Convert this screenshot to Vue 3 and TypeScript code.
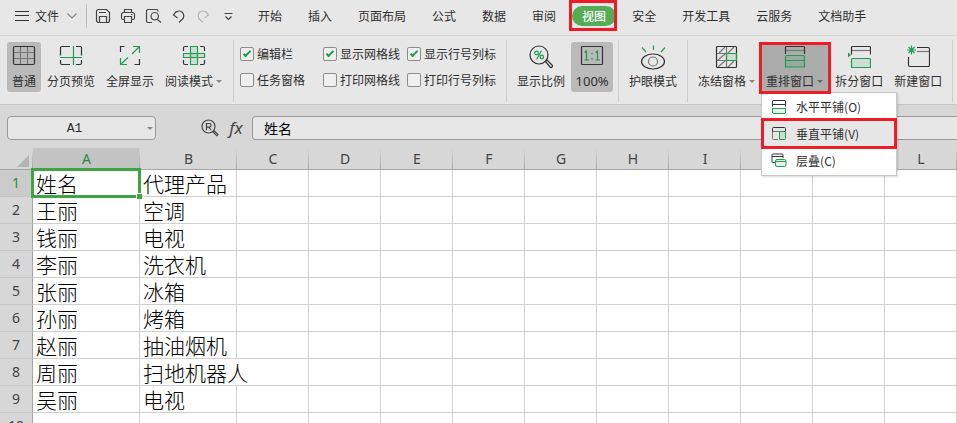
<script setup lang="ts">
import { ref } from 'vue'

interface Toggle {
  id: string
  label: string
  checked: boolean
}

const tabs: string[] = ['开始', '插入', '页面布局', '公式', '数据', '审阅', '视图', '安全', '开发工具', '云服务', '文档助手']
const activeTab = ref('视图')

const toggles = ref<Toggle[]>([
  { id: 'formula-bar', label: '编辑栏', checked: true },
  { id: 'gridlines', label: '显示网格线', checked: true },
  { id: 'headings', label: '显示行号列标', checked: true },
  { id: 'task-pane', label: '任务窗格', checked: false },
  { id: 'print-gridlines', label: '打印网格线', checked: false },
  { id: 'print-headings', label: '打印行号列标', checked: false },
])

const columns: string[] = ['A', 'B', 'C', 'D', 'E', 'F', 'G', 'H', 'I', 'J', 'K', 'L']
const emptyColumns: string[] = columns.slice(2)
const rows: [string, string][] = [
  ['姓名', '代理产品'],
  ['王丽', '空调'],
  ['钱丽', '电视'],
  ['李丽', '洗衣机'],
  ['张丽', '冰箱'],
  ['孙丽', '烤箱'],
  ['赵丽', '抽油烟机'],
  ['周丽', '扫地机器人'],
  ['吴丽', '电视'],
  ['', ''],
]

const cellName = ref('A1')
const formula = ref('姓名')
</script>

<template>
  <div class="app">
    <header class="topbar">
      <button class="file">
        <svg width="14" height="12" viewBox="0 0 14 12"><path d="M0 1.500h14M0 5.500h14M0 10.500h14" /></svg>
        <span>文件</span>
        <svg class="chev" width="10" height="6" viewBox="0 0 10 6"><path d="M.5.5 5 5 9.500.5" /></svg>
      </button>
      <div class="quick">
        <button aria-label="保存">
          <svg width="16" height="16" viewBox="0 0 16 16"><path d="M1.500 3.500a2 2 0 0 1 2-2h8l3 3v8a2 2 0 0 1-2 2h-9a2 2 0 0 1-2-2zM4.500 14V8.500h7V14M4 4.500h7" /></svg>
        </button>
        <button aria-label="打印">
          <svg width="16" height="16" viewBox="0 0 16 16"><path d="M4.500 4V1.500h7V4M4 11.500H3a1.500 1.500 0 0 1-1.500-1.500V6.500A2 2 0 0 1 3.500 4.500h9a2 2 0 0 1 2 2V10a1.500 1.500 0 0 1-1.500 1.500h-1M4.500 8.500h7v6h-7zM11 6.500h1.500" /></svg>
        </button>
        <button aria-label="打印预览">
          <svg width="17" height="16" viewBox="0 0 17 16"><path d="M7 14.500H3a1.500 1.500 0 0 1-1.500-1.500V3A1.500 1.500 0 0 1 3 1.500h8.500A1.500 1.500 0 0 1 13 3v.5M12.200 11.200 16 14.500" /><circle cx="9.700" cy="8.200" r="3.700" /></svg>
        </button>
        <button aria-label="撤销">
          <svg width="16" height="16" viewBox="0 0 16 16"><path d="m6.500 3-3 4 4 3M3.500 7C6 3 9.500 2 12 4s2.500 6-.500 8L9 14.500" /></svg>
        </button>
        <button class="off" aria-label="恢复">
          <svg width="16" height="16" viewBox="0 0 16 16"><path d="m10.500 3 3 4-4 3M13.500 7C11 3 7.500 2 5 4s-2.500 6 .5 8L8 14.500" /></svg>
        </button>
        <button aria-label="自定义快速访问工具栏">
          <svg width="16" height="16" viewBox="0 0 16 16"><path d="M4.500 5.500h8M5.500 8.500l3 3 3-3" /></svg>
        </button>
      </div>
      <nav class="tabs">
        <button v-for="tab in tabs" :key="tab" class="tab" :class="{ active: tab === activeTab }" @click="activeTab = tab">
          {{ tab }}<span v-if="tab === '视图'" class="mark mark-tab"></span>
        </button>
      </nav>
    </header>

    <section class="ribbon">
      <button class="tool pressed">
        <svg width="24" height="22" viewBox="0 0 24 22"><path class="g" d="M1.500 7.500h21M1.500 13.500h21M8.500 1.500v18M15.500 1.500v18" /><rect x="1.500" y="1.500" width="21" height="18" rx="1.500" /></svg>
        <span>普通</span>
      </button>
      <button class="tool">
        <svg width="24" height="22" viewBox="0 0 24 22"><path d="M11 1.500H3A1.500 1.500 0 0 0 1.500 3v7.500M17 1.500h4A1.500 1.500 0 0 1 22.500 3v7.500M1.500 15v3A1.500 1.500 0 0 0 3 19.500h8M17 19.500h4a1.500 1.500 0 0 0 1.500-1.500v-3" /><path class="e" d="M1 12.500h22M14.500 1v19" /></svg>
        <span>分页预览</span>
      </button>
      <button class="tool">
        <svg width="24" height="22" viewBox="0 0 24 22"><path d="M6.500 1.500h-4V7M21.500 14v5.500h-5" /><path class="e" d="m14 9 7.500-7.500M15 1.500h6.500V8M10 12.500l-7.500 7M2.500 13v6.500H9" /></svg>
        <span>全屏显示</span>
      </button>
      <button class="tool">
        <svg width="24" height="22" viewBox="0 0 24 22"><path d="M6 1.500H3A1.500 1.500 0 0 0 1.500 3v3M18 1.500h3A1.500 1.500 0 0 1 22.500 3v3M1.500 15v3A1.500 1.500 0 0 0 3 19.500h3M18 19.500h3a1.500 1.500 0 0 0 1.500-1.500v-3" /><path class="e f" d="M8.500 1.500h7v18h-7z" /><path class="e f" d="M1.500 8.500h21v4h-21z" /></svg>
        <span class="drop">阅读模式</span>
      </button>
      <i class="sep wide"></i>
      <div class="checks">
        <label v-for="t in toggles" :key="t.id" :for="t.id"><input :id="t.id" v-model="t.checked" type="checkbox" />{{ t.label }}</label>
      </div>
      <i class="sep"></i>
      <button class="tool">
        <svg width="24" height="24" viewBox="0 0 24 24"><circle cx="10" cy="10" r="9" /><path d="m16.500 16.500 1.500-1.500 5 5a1.300 1.300 0 0 1-2 2z" /><circle class="e" cx="7.500" cy="8" r="1.800" /><circle class="e" cx="12.800" cy="12" r="1.800" /><path class="e" d="m12.500 5.500-5 9" /></svg>
        <span>显示比例</span>
      </button>
      <button class="tool pressed zoom">
        <svg width="24" height="22" viewBox="0 0 24 22"><rect x="1.500" y="1.500" width="21" height="18" rx="1" /><path class="e" d="M4.500 7.500 6.500 6v9M4.500 15h4.500M15.500 7.500l2-1.500v9M15.500 15H20M12 8v1.500M12 13v1.500" /></svg>
        <span class="pct">100%</span>
      </button>
      <i class="sep"></i>
      <button class="tool">
        <svg width="26" height="26" viewBox="0 0 26 26"><ellipse cx="13" cy="16.500" rx="11.500" ry="7.500" /><circle class="g" cx="13" cy="16.500" r="4.500" /><path class="e" d="m2 2.500 4 4.500M13.500.5v4.500M25 2.500 21 7" /></svg>
        <span>护眼模式</span>
      </button>
      <i class="sep"></i>
      <button class="tool">
        <svg width="24" height="24" viewBox="0 0 24 24"><path class="g" d="M1.500 8.500h20M1.500 15.500h20M11.500 1.500v21M4 8l6-6M13 8l6-6M3 15l7-6M3 22l7-6M13 22l6-6" /><rect x="1.500" y="1.500" width="20" height="21" rx="1" /><path class="e f" d="M11.500 8.500h10v7h-10z" /></svg>
        <span class="drop">冻结窗格</span>
      </button>
      <div class="menu-anchor">
        <button class="tool open" aria-haspopup="menu" aria-expanded="true">
          <svg width="24" height="24" viewBox="0 0 24 24"><path d="M2.500 9V2.500a1 1 0 0 1 1-1h17a1 1 0 0 1 1 1V9" /><path class="g" d="M3 5.500h18" /><path class="e f" d="M2.500 22V11.500a1 1 0 0 1 1-1h17a1 1 0 0 1 1 1V22zM2.500 15.500h19" /></svg>
          <span class="drop">重排窗口</span>
        </button>
        <span class="mark mark-tool"></span>
        <div class="menu" role="menu">
          <button role="menuitem">
            <svg width="16" height="16" viewBox="0 0 16 16"><path d="M1.500 7.500V2a.5.5 0 0 1 .5-.5h12a.5.5 0 0 1 .5.5v5.500M1.500 5.500h13" /><path class="e f" d="M1.500 9.500h13V13a1.500 1.500 0 0 1-1.500 1.500H3A1.500 1.500 0 0 1 1.500 13z" /></svg>水平平铺(O)
          </button>
          <button role="menuitem" class="hover">
            <svg width="16" height="16" viewBox="0 0 16 16"><path class="g" d="M1.500 5.500h13M7 13.500H2.500a1 1 0 0 1-1-1V5" /><path d="M1.500 5.500v-3a1 1 0 0 1 1-1h11a1 1 0 0 1 1 1v3" /><path class="e f" d="M8.500 5.500h6v7a1 1 0 0 1-1 1h-5z" /></svg>垂直平铺(V)
            <span class="mark mark-item"></span>
          </button>
          <button role="menuitem">
            <svg width="16" height="16" viewBox="0 0 16 16"><path d="M4 9.500H2a1 1 0 0 1-1-1V2a1 1 0 0 1 1-1h9a1 1 0 0 1 1 1v3M1 3.500h11" /><rect class="e f" x="4.500" y="6.500" width="10.500" height="7" rx="1.500" /><path class="e" d="M5 8.500h10" /></svg>层叠(C)
          </button>
        </div>
      </div>
      <button class="tool">
        <svg width="24" height="24" viewBox="0 0 24 24"><path d="M4.500 9.500v-7a1 1 0 0 1 1-1h17a1 1 0 0 1 1 1v7" /><path class="g" d="M5 5.500h18" /><path class="e f" d="M4.500 22.500V14.500a1 1 0 0 1 1-1h17a1 1 0 0 1 1 1v8z" /><path class="solid" d="M1 7.500v5L4 10z" /></svg>
        <span>拆分窗口</span>
      </button>
      <button class="tool">
        <svg width="24" height="24" viewBox="0 0 24 24"><path d="M2.500 12v8a1.500 1.500 0 0 0 1.500 1.500h18a1.500 1.500 0 0 0 1.500-1.500V4A1.500 1.500 0 0 0 22 2.500H11" /><path class="g" d="M11 6.500h12" /><path class="e" d="M5.500.5v9M1 5h9M2.500 2l6 6M8.500 2l-6 6" /></svg>
        <span>新建窗口</span>
      </button>
      <i class="sep"></i>
    </section>

    <section class="formula">
      <div class="namebox">
        <input v-model="cellName" aria-label="名称框" />
        <i class="caret"></i>
      </div>
      <button class="find" aria-label="查找">
        <svg width="18" height="18" viewBox="0 0 18 18"><circle cx="7.500" cy="7.500" r="6.500" /><path d="M5.500 11V4.500h2.700a1.800 1.800 0 0 1 0 3.700H5.500M8 8.200l2 2.800M12 13l1.200-1.200 3.800 3.700-1.200 1.200z" /></svg>
      </button>
      <button class="fx" aria-label="插入函数">fx</button>
      <input v-model="formula" class="formula-input" aria-label="编辑栏" />
    </section>

    <div class="sheet">
      <table>
        <colgroup>
          <col class="c-num" /><col class="c-a" /><col class="c-b" />
          <col v-for="c in emptyColumns" :key="c" class="c-n" />
        </colgroup>
        <thead>
          <tr>
            <th class="corner"><svg width="12" height="12" viewBox="0 0 12 12"><path d="M12 0v12H0z" /></svg></th>
            <th v-for="c in columns" :key="c" scope="col" :class="{ sel: c === 'A' }">{{ c }}</th>
          </tr>
        </thead>
        <tbody>
          <tr v-for="(row, r) in rows" :key="r">
            <th scope="row" :class="{ sel: r === 0 }">{{ r + 1 }}</th>
            <td :class="{ current: r === 0 }">{{ row[0] }}</td>
            <td :class="{ spill: row[1].length > 4 }">{{ row[1] }}</td>
            <td v-for="c in emptyColumns" :key="c"></td>
          </tr>
        </tbody>
      </table>
    </div>
  </div>
</template>

<style>
body {
  overflow: hidden;
  background: #d7d7d7;
}
</style>

<style scoped>
.app {
  height: 100vh;
  display: flex;
  flex-direction: column;
  overflow: hidden;
  color: #303030;
  font-family: 'Noto Sans CJK SC', sans-serif;
  font-size: 12px;
  line-height: 20px;
}
button,
input {
  margin: 0;
  padding: 0;
  border: 0;
  background: none;
  color: inherit;
  font: inherit;
}
svg {
  display: block;
  flex: none;
  fill: none;
  stroke: #333;
  stroke-width: 1.2;
}
svg .g {
  stroke: #777;
}
svg .e {
  stroke: #1f9e52;
}
svg .f {
  fill: rgba(31, 158, 82, 0.12);
}
svg .solid {
  fill: #1f9e52;
  stroke: none;
}
.topbar {
  flex: none;
  display: flex;
  align-items: center;
  height: 32px;
  padding: 0 0 3px 15px;
  background: #e7e7e7;
  border-bottom: 1px solid #d3d3d3;
}
.file {
  display: flex;
  align-items: center;
  gap: 6px;
  height: 24px;
  padding-right: 9px;
  border-right: 1px solid #bdbdbd;
}
.chev {
  margin-left: 2px;
  stroke: #888;
}
.quick {
  display: flex;
  gap: 9px;
  padding-left: 8px;
}
.quick button {
  width: 16px;
}
.quick svg {
  stroke: #444;
}
.quick .off svg {
  stroke: #b5b5b5;
}
.tabs {
  display: flex;
  gap: 6px;
  padding-left: 12px;
}
.tab {
  position: relative;
  flex: none;
  height: 20px;
  padding: 0 10px;
  border-radius: 10px;
  white-space: nowrap;
}
.tab.active {
  background: #53ad52;
  color: #fff;
  font-weight: 500;
}
.mark {
  position: absolute;
  border: 3px solid #ee1c25;
  pointer-events: none;
}
.mark-tab {
  inset: -6px -1px -5px -3px;
}
.ribbon {
  flex: none;
  display: flex;
  align-items: flex-start;
  gap: 1px;
  padding: 6px 0 0 7px;
  height: 62px;
  background: #e7e7e7;
  border-bottom: 1px solid #c4c4c4;
}
.tool {
  flex: none;
  display: flex;
  flex-direction: column;
  align-items: center;
  justify-content: space-between;
  height: 50px;
  padding: 3px 5px 2px;
  border-radius: 3px;
  white-space: nowrap;
}
.tool.pressed {
  background: #bababa;
}
.tool.zoom {
  width: 42px;
}
.tool.open {
  background: #acacac;
  border-radius: 0;
}
.tool span {
  line-height: 18px;
}
.tool .pct {
  font-family: 'Noto Sans', sans-serif;
  font-size: 13px;
}
.drop::after {
  content: '';
  display: inline-block;
  margin-left: 3px;
  border: 3px solid transparent;
  border-top-color: #888;
  border-bottom: 0;
  vertical-align: 3px;
}
.open .drop::after {
  border-top-color: #666;
}
.sep {
  flex: none;
  width: 1px;
  height: 62px;
  margin: -2px 4px 0;
  background: #cccccc;
}
.sep.wide {
  margin: -2px 5px 0 5px;
}
.checks {
  display: grid;
  grid-template-columns: 83px 84px 94px;
  row-gap: 6px;
  padding-top: 2px;
}
.checks label {
  display: flex;
  align-items: center;
  gap: 3px;
  white-space: nowrap;
}
.checks input {
  appearance: none;
  flex: none;
  display: grid;
  place-items: center;
  width: 14px;
  height: 14px;
  border: 1px solid #8c8c8c;
  border-radius: 2px;
  background: #efefef;
}
.checks input:checked::after {
  content: '';
  width: 6px;
  height: 2px;
  margin-bottom: 3px;
  border: solid #1f9e52;
  border-width: 0 0 2px 2px;
  transform: rotate(-45deg);
}
.menu-anchor {
  position: relative;
}
.mark-tool {
  inset: 0 -3px -2px -2px;
  z-index: 3;
}
.menu-anchor + .tool {
  margin-left: 1px;
}
.menu {
  position: absolute;
  z-index: 2;
  top: 50px;
  left: 0;
  width: 136px;
  box-sizing: border-box;
  padding-bottom: 1px;
  border: 1px solid #c8c8c8;
  background: #fff;
  box-shadow: 1px 1px 2px rgba(0, 0, 0, 0.15);
}
.menu svg {
  stroke-width: 1;
}
.menu button {
  position: relative;
  display: flex;
  align-items: center;
  gap: 9px;
  width: 100%;
  height: 27px;
  padding-left: 9px;
}
.menu .hover {
  background: #e6e6e6;
}
.mark-item {
  inset: -2px -1px;
}
.formula {
  flex: none;
  display: flex;
  align-items: center;
  padding: 11px 0 8px 7px;
  background: #d7d7d7;
}
.namebox {
  box-sizing: border-box;
  display: flex;
  align-items: center;
  width: 149px;
  height: 24px;
  border: 1px solid #999;
  border-radius: 4px;
  background: #e7e7e7;
}
.namebox input {
  flex: 1;
  min-width: 0;
  padding: 2px 6px 0 0;
  font-family: 'Liberation Mono', monospace;
  font-size: 13px;
  text-align: center;
}
.caret {
  margin-right: 2px;
  border: 3px solid transparent;
  border-top-color: #888;
  border-bottom: 0;
}
.find {
  margin-left: 45px;
}
.find svg {
  stroke: #444;
}
.fx {
  margin: 0 8px 0 9px;
  width: 16px;
  color: #444;
  font: italic 17px/20px 'Noto Sans', sans-serif;
}
.formula-input {
  box-sizing: border-box;
  flex: 1;
  min-width: 0;
  height: 24px;
  padding-left: 11px;
  border: 1px solid #999;
  border-right: 0;
  border-radius: 4px 0 0 4px;
  background: #e7e7e7;
  color: #000;
  font-size: 14px;
}
.sheet {
  flex: 1;
  min-height: 0;
  overflow: hidden;
  background: #fff;
}
table {
  width: 957px;
  table-layout: fixed;
  border-collapse: separate;
  border-spacing: 0;
}
.c-num {
  width: 33px;
}
.c-a {
  width: 107px;
}
.c-b {
  width: 97px;
}
.c-n {
  width: 72px;
}
th {
  box-sizing: border-box;
  padding: 0;
  background: #d7d7d7;
  color: #444;
  font: 14px/20px 'Noto Sans', sans-serif;
}
thead th {
  height: 22px;
  border-bottom: 1px solid #a6a6a6;
  background: linear-gradient(#d7d7d7, #a6a6a6) right / 1px 100% no-repeat #d7d7d7;
}
th.sel {
  color: #2e8b40;
}
thead th.sel {
  background-color: #c4c4c4;
}
.corner svg {
  margin: 4px 4px 0 auto;
  fill: #b5b5b5;
  stroke: none;
}
tbody th {
  border-right: 1px solid #a6a6a6;
  border-bottom: 1px solid #c6c6c6;
}
tbody th.sel {
  background: #cbcbcb;
}
td {
  position: relative;
  box-sizing: border-box;
  height: 27px;
  padding: 0 0 0 3px;
  border-right: 1px solid #d0d0d0;
  border-bottom: 1px solid #d0d0d0;
  color: #000;
  font-size: 21px;
  font-weight: 300;
  line-height: 26px;
  white-space: nowrap;
}
td.spill {
  border-right-color: transparent;
}
.current::before {
  content: '';
  position: absolute;
  inset: -2px -2px -2px -2px;
  border: 3px solid #3ea544;
}
.current::after {
  content: '';
  position: absolute;
  z-index: 1;
  right: -3px;
  bottom: -3px;
  width: 5px;
  height: 5px;
  border: solid #fff;
  border-width: 1px 0 0 1px;
  background: #3ea544;
}
</style>
